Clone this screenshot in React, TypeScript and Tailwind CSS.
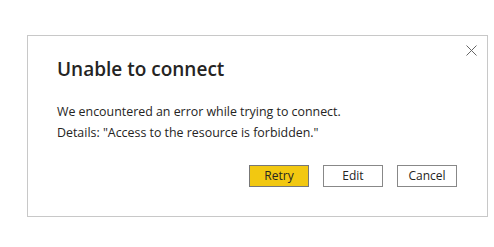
import React from 'react';

export default function App() {
  return (
    <div className="w-[494px] h-[247px] bg-white pt-[35px] pl-[27px] font-['Open_Sans',sans-serif] text-[#252423]">
      <div className="relative w-[461px] h-[182px] border border-[#c8c8c8] bg-white pl-[29px] pr-[30px] pt-[19px]">
        <button className="absolute right-[10px] top-[8px] w-[12px] h-[12px] flex items-center justify-center">
          <svg width="11" height="11" viewBox="0 0 11 11" fill="none" stroke="#666" strokeWidth="1">
            <path d="M0.5 0.5 L10.5 10.5 M10.5 0.5 L0.5 10.5" />
          </svg>
        </button>
        <h1 className="text-[19px] leading-[28px] font-semibold">Unable to connect</h1>
        <div className="mt-[18px] text-[12.4px] leading-[21px]">
          <p>We encountered an error while trying to connect.</p>
          <p>Details: "Access to the resource is forbidden."</p>
        </div>
        <div className="flex justify-end gap-[14px] mt-[22px]">
          <button className="w-[60px] h-[22px] border border-[#777] bg-[#f2c811] text-[12px] leading-none">Retry</button>
          <button className="w-[60px] h-[22px] border border-[#888] bg-white text-[12px] leading-none">Edit</button>
          <button className="w-[60px] h-[22px] border border-[#888] bg-white text-[12px] leading-none">Cancel</button>
        </div>
      </div>
    </div>
  );
}
